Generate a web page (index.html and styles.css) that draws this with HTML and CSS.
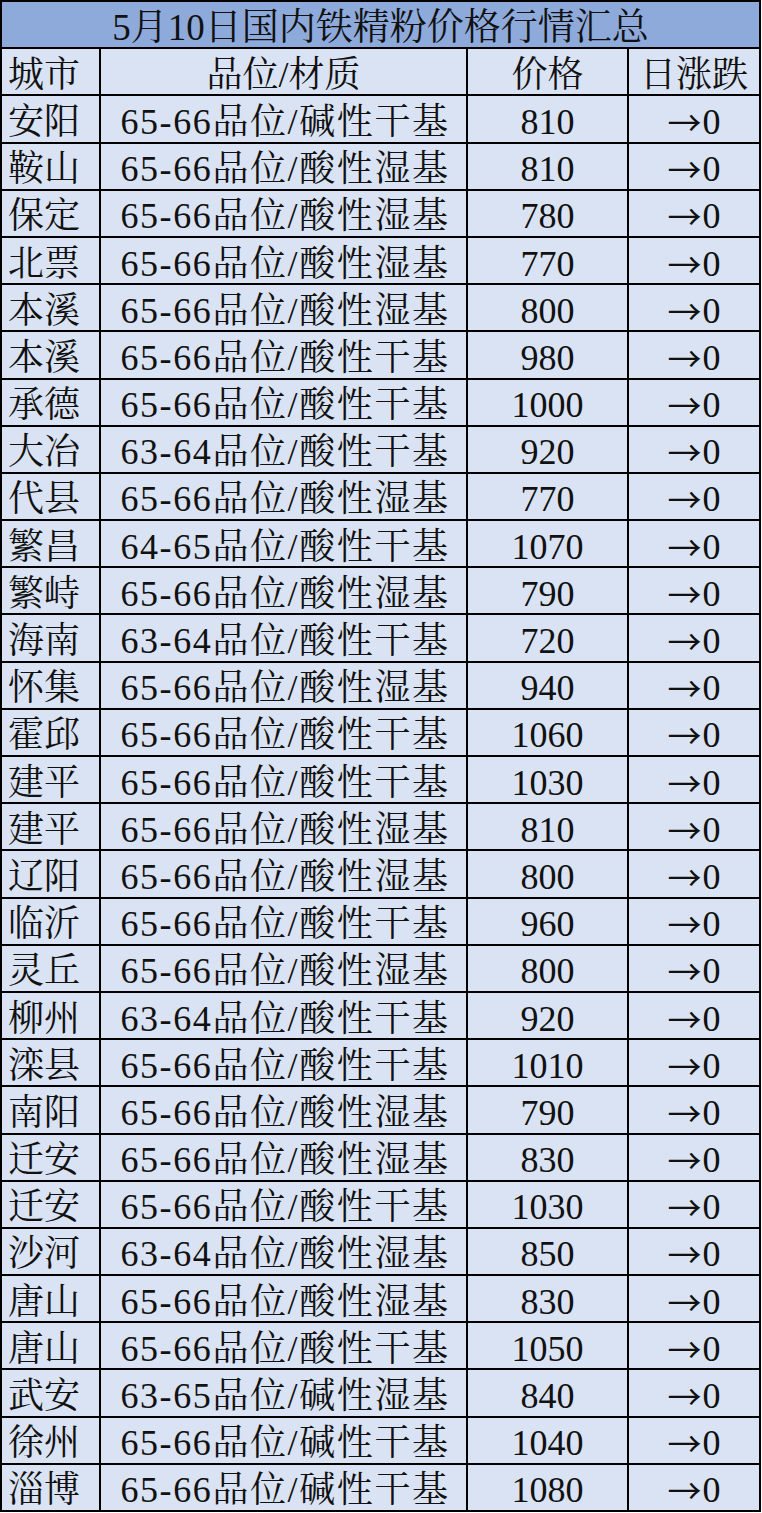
FILE: index.html
```html
<!DOCTYPE html>
<html lang="zh-CN">
<head>
<meta charset="utf-8">
<title>5月10日国内铁精粉价格行情汇总</title>
<link rel="stylesheet" href="styles.css">
</head>
<body>
<div class="sheet">
  <div class="cell title">5月10日国内铁精粉价格行情汇总</div>
  <div class="cell city">城市</div><div class="cell mid">品位/材质</div><div class="cell mid">价格</div><div class="cell mid">日涨跌</div>
  <div class="cell city">安阳</div><div class="cell mid spec">65-66品位/碱性干基</div><div class="cell mid">810</div><div class="cell mid"><span class="arr">→</span>0</div>
  <div class="cell city">鞍山</div><div class="cell mid spec">65-66品位/酸性湿基</div><div class="cell mid">810</div><div class="cell mid"><span class="arr">→</span>0</div>
  <div class="cell city">保定</div><div class="cell mid spec">65-66品位/酸性湿基</div><div class="cell mid">780</div><div class="cell mid"><span class="arr">→</span>0</div>
  <div class="cell city">北票</div><div class="cell mid spec">65-66品位/酸性湿基</div><div class="cell mid">770</div><div class="cell mid"><span class="arr">→</span>0</div>
  <div class="cell city">本溪</div><div class="cell mid spec">65-66品位/酸性湿基</div><div class="cell mid">800</div><div class="cell mid"><span class="arr">→</span>0</div>
  <div class="cell city">本溪</div><div class="cell mid spec">65-66品位/酸性干基</div><div class="cell mid">980</div><div class="cell mid"><span class="arr">→</span>0</div>
  <div class="cell city">承德</div><div class="cell mid spec">65-66品位/酸性干基</div><div class="cell mid">1000</div><div class="cell mid"><span class="arr">→</span>0</div>
  <div class="cell city">大冶</div><div class="cell mid spec">63-64品位/酸性干基</div><div class="cell mid">920</div><div class="cell mid"><span class="arr">→</span>0</div>
  <div class="cell city">代县</div><div class="cell mid spec">65-66品位/酸性湿基</div><div class="cell mid">770</div><div class="cell mid"><span class="arr">→</span>0</div>
  <div class="cell city">繁昌</div><div class="cell mid spec">64-65品位/酸性干基</div><div class="cell mid">1070</div><div class="cell mid"><span class="arr">→</span>0</div>
  <div class="cell city">繁峙</div><div class="cell mid spec">65-66品位/酸性湿基</div><div class="cell mid">790</div><div class="cell mid"><span class="arr">→</span>0</div>
  <div class="cell city">海南</div><div class="cell mid spec">63-64品位/酸性干基</div><div class="cell mid">720</div><div class="cell mid"><span class="arr">→</span>0</div>
  <div class="cell city">怀集</div><div class="cell mid spec">65-66品位/酸性湿基</div><div class="cell mid">940</div><div class="cell mid"><span class="arr">→</span>0</div>
  <div class="cell city">霍邱</div><div class="cell mid spec">65-66品位/酸性干基</div><div class="cell mid">1060</div><div class="cell mid"><span class="arr">→</span>0</div>
  <div class="cell city">建平</div><div class="cell mid spec">65-66品位/酸性干基</div><div class="cell mid">1030</div><div class="cell mid"><span class="arr">→</span>0</div>
  <div class="cell city">建平</div><div class="cell mid spec">65-66品位/酸性湿基</div><div class="cell mid">810</div><div class="cell mid"><span class="arr">→</span>0</div>
  <div class="cell city">辽阳</div><div class="cell mid spec">65-66品位/酸性湿基</div><div class="cell mid">800</div><div class="cell mid"><span class="arr">→</span>0</div>
  <div class="cell city">临沂</div><div class="cell mid spec">65-66品位/酸性干基</div><div class="cell mid">960</div><div class="cell mid"><span class="arr">→</span>0</div>
  <div class="cell city">灵丘</div><div class="cell mid spec">65-66品位/酸性湿基</div><div class="cell mid">800</div><div class="cell mid"><span class="arr">→</span>0</div>
  <div class="cell city">柳州</div><div class="cell mid spec">63-64品位/酸性干基</div><div class="cell mid">920</div><div class="cell mid"><span class="arr">→</span>0</div>
  <div class="cell city">滦县</div><div class="cell mid spec">65-66品位/酸性干基</div><div class="cell mid">1010</div><div class="cell mid"><span class="arr">→</span>0</div>
  <div class="cell city">南阳</div><div class="cell mid spec">65-66品位/酸性湿基</div><div class="cell mid">790</div><div class="cell mid"><span class="arr">→</span>0</div>
  <div class="cell city">迁安</div><div class="cell mid spec">65-66品位/酸性湿基</div><div class="cell mid">830</div><div class="cell mid"><span class="arr">→</span>0</div>
  <div class="cell city">迁安</div><div class="cell mid spec">65-66品位/酸性干基</div><div class="cell mid">1030</div><div class="cell mid"><span class="arr">→</span>0</div>
  <div class="cell city">沙河</div><div class="cell mid spec">63-64品位/酸性湿基</div><div class="cell mid">850</div><div class="cell mid"><span class="arr">→</span>0</div>
  <div class="cell city">唐山</div><div class="cell mid spec">65-66品位/酸性湿基</div><div class="cell mid">830</div><div class="cell mid"><span class="arr">→</span>0</div>
  <div class="cell city">唐山</div><div class="cell mid spec">65-66品位/酸性干基</div><div class="cell mid">1050</div><div class="cell mid"><span class="arr">→</span>0</div>
  <div class="cell city">武安</div><div class="cell mid spec">63-65品位/碱性湿基</div><div class="cell mid">840</div><div class="cell mid"><span class="arr">→</span>0</div>
  <div class="cell city">徐州</div><div class="cell mid spec">65-66品位/碱性干基</div><div class="cell mid">1040</div><div class="cell mid"><span class="arr">→</span>0</div>
  <div class="cell city">淄博</div><div class="cell mid spec">65-66品位/碱性干基</div><div class="cell mid">1080</div><div class="cell mid"><span class="arr">→</span>0</div>
</div>
</body>
</html>
```

FILE: styles.css
```css
html, body {
  margin: 0;
  padding: 0;
  background: #ffffff;
}

.sheet {
  width: 761px;
  box-sizing: border-box;
  display: grid;
  grid-template-columns: 97px 365px 159px 130px;
  grid-auto-rows: 45.2px;
  gap: 2px;
  padding: 2px;
  background: #000000;
  font-family: "Liberation Serif", "Noto Serif CJK SC", "Noto Sans CJK SC", serif;
  font-size: 36px;
  color: #111111;
}

.cell {
  display: flex;
  align-items: center;
  background: #dae3f3;
  line-height: 36px;
  padding-top: 6px;
  box-sizing: border-box;
  white-space: nowrap;
}

.title {
  grid-column: 1 / -1;
  justify-content: center;
  background: #8eaadb;
  font-size: 37px;
}

.city {
  justify-content: flex-start;
  padding-left: 6px;
}

.mid {
  justify-content: center;
}

.spec {
  letter-spacing: 1.6px;
  padding-left: 3px;
}

.arr {
  font-family: "Noto Sans CJK SC", sans-serif;
  font-size: 34px;
  line-height: 36px;
  margin-right: 1px;
}
```
